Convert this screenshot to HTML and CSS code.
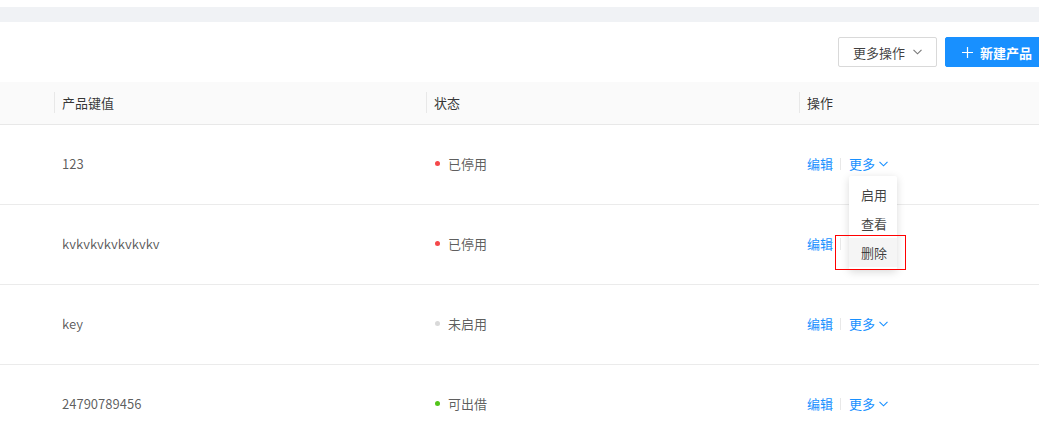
FILE: index.html
```html
<!DOCTYPE html>
<html lang="zh-CN">
<head>
    <meta charset="UTF-8">
    <title>产品列表</title>
    <link rel="stylesheet" href="styles.css">
</head>
<body>
    <div class="page">
        <div class="band"></div>
        <div class="toolbar">
            <button class="btn">更多操作
                <svg class="chev" width="9" height="6" viewBox="0 0 9 6"><path d="M0.5 0.8 L4.5 4.8 L8.5 0.8" fill="none" stroke="#777" stroke-width="1.1"/></svg>
            </button>
            <button class="btn btn-primary">
                <svg class="plus" width="11" height="11" viewBox="0 0 11 11"><path d="M5.5 0 V11 M0 5.5 H11" stroke="#fff" stroke-width="1.2"/></svg>
                新建产品
            </button>
        </div>
        <div class="table">
            <div class="row head">
                <div class="cell"></div>
                <div class="cell sep">产品键值</div>
                <div class="cell sep">状态</div>
                <div class="cell sep">操作</div>
            </div>
            <div class="row">
                <div class="cell"></div>
                <div class="cell">123</div>
                <div class="cell"><span class="dot red"></span>已停用</div>
                <div class="cell actions">
                    <a class="link">编辑</a><span class="divider"></span>
                    <span class="more"><a class="link">更多</a>
                        <svg class="chev" width="9" height="6" viewBox="0 0 9 6"><path d="M0.5 0.8 L4.5 4.8 L8.5 0.8" fill="none" stroke="#1890ff" stroke-width="1.1"/></svg>
                        <ul class="menu">
                            <li>启用</li>
                            <li>查看</li>
                            <li class="hover">删除</li>
                        </ul>
                        <span class="mark"></span>
                    </span>
                </div>
            </div>
            <div class="row">
                <div class="cell"></div>
                <div class="cell">kvkvkvkvkvkvkv</div>
                <div class="cell"><span class="dot red"></span>已停用</div>
                <div class="cell actions">
                    <a class="link">编辑</a><span class="divider"></span>
                    <span class="more"><a class="link">更多</a>
                        <svg class="chev" width="9" height="6" viewBox="0 0 9 6"><path d="M0.5 0.8 L4.5 4.8 L8.5 0.8" fill="none" stroke="#1890ff" stroke-width="1.1"/></svg>
                    </span>
                </div>
            </div>
            <div class="row">
                <div class="cell"></div>
                <div class="cell">key</div>
                <div class="cell"><span class="dot gray"></span>未启用</div>
                <div class="cell actions">
                    <a class="link">编辑</a><span class="divider"></span>
                    <span class="more"><a class="link">更多</a>
                        <svg class="chev" width="9" height="6" viewBox="0 0 9 6"><path d="M0.5 0.8 L4.5 4.8 L8.5 0.8" fill="none" stroke="#1890ff" stroke-width="1.1"/></svg>
                    </span>
                </div>
            </div>
            <div class="row">
                <div class="cell"></div>
                <div class="cell">24790789456</div>
                <div class="cell"><span class="dot green"></span>可出借</div>
                <div class="cell actions">
                    <a class="link">编辑</a><span class="divider"></span>
                    <span class="more"><a class="link">更多</a>
                        <svg class="chev" width="9" height="6" viewBox="0 0 9 6"><path d="M0.5 0.8 L4.5 4.8 L8.5 0.8" fill="none" stroke="#1890ff" stroke-width="1.1"/></svg>
                    </span>
                </div>
            </div>
        </div>
    </div>
</body>
</html>
```

FILE: styles.css
```css
body {
    margin: 0;
    overflow: hidden;
    background: #fff;
    font-family: "Noto Sans CJK SC", "Noto Sans", sans-serif;
    font-size: 13px;
    color: rgba(0, 0, 0, 0.65);
}
.page {
    width: 1060px;
    padding-top: 7px;
}
.band {
    height: 15px;
    background: #f0f2f5;
}
.toolbar {
    display: flex;
    gap: 8px;
    padding: 15px 0 15px 838px;
}
.btn {
    height: 30px;
    padding: 0 14px;
    border: 1px solid #d9d9d9;
    border-radius: 2px;
    background: #fff;
    color: rgba(0, 0, 0, 0.75);
    font-family: inherit;
    font-size: 13px;
    display: flex;
    align-items: center;
    gap: 8px;
}
.btn-primary {
    background: #1890ff;
    border-color: #1890ff;
    color: #fff;
    font-weight: bold;
    padding: 0 16px;
    gap: 7px;
}
.row {
    box-sizing: border-box;
    display: grid;
    grid-template-columns: 54px 372px 373px 1fr;
    height: 80px;
    padding-bottom: 2px;
    border-bottom: 1px solid #ebebeb;
    align-items: center;
}
.row.head {
    height: 43px;
    background: #fafafa;
    color: rgba(0, 0, 0, 0.8);
    border-bottom-color: #e8e8e8;
}
.cell {
    padding-left: 8px;
    display: flex;
    align-items: center;
}
.sep {
    border-left: 1px solid #e8e8e8;
    padding-left: 7px;
    height: 21px;
}
.dot {
    width: 5px;
    height: 5px;
    border-radius: 50%;
    margin: 0 8px 0 1px;
}
.red { background: #f5484a; }
.gray { background: #d9d9d9; }
.green { background: #52c41a; }
.link {
    color: #1890ff;
    cursor: pointer;
}
.divider {
    width: 1px;
    height: 12px;
    background: #e8e8e8;
    margin: 0 8px 0 7px;
}
.more {
    position: relative;
    display: flex;
    align-items: center;
    gap: 4px;
}
.menu {
    position: absolute;
    left: 0;
    top: 22px;
    margin: 0;
    padding: 4px 0 3px;
    list-style: none;
    width: 48px;
    background: #fff;
    box-shadow: 0 2px 8px rgba(0, 0, 0, 0.15);
    border-radius: 2px;
    z-index: 2;
}
.menu li {
    height: 29px;
    line-height: 29px;
    padding-left: 12px;
    color: rgba(0, 0, 0, 0.75);
}
.menu li.hover {
    background: #f5f5f5;
}
.mark {
    position: absolute;
    left: -14px;
    top: 81px;
    width: 71px;
    height: 35px;
    box-shadow: inset 0 0 0 1px #ff0000;
    z-index: 3;
}
```
